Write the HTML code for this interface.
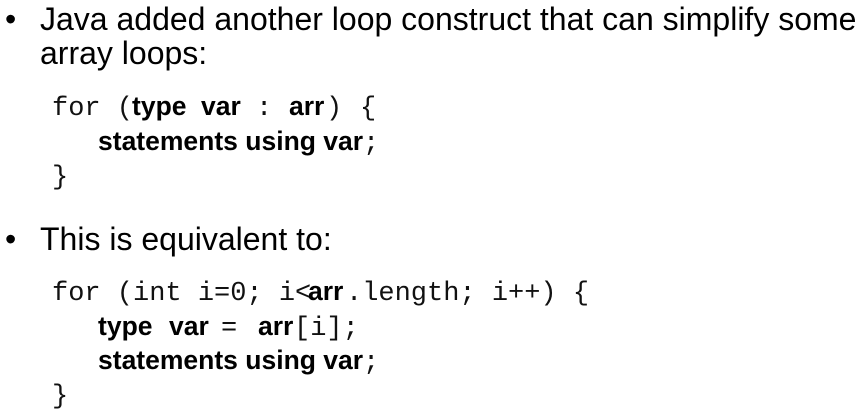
<!DOCTYPE html>
<html><head><meta charset="utf-8"><style>
body{margin:0;width:860px;height:420px;background:#fff;position:relative;overflow:hidden;color:#000}
.s{position:absolute;font-family:"Liberation Sans",Arial,sans-serif;font-size:32px;line-height:32px;white-space:pre}
.m{position:absolute;font-family:"Liberation Mono","Courier New",monospace;font-size:27px;line-height:27px;white-space:pre;color:#111}
.b{position:absolute;font-family:"Liberation Sans",Arial,sans-serif;font-weight:bold;font-size:26.5px;line-height:27px;white-space:pre}
</style></head><body>
<div class="s" style="left:5px;top:3px">•</div>
<div class="s" style="left:40px;top:3px">Java added another loop construct that can simplify some</div>
<div class="s" style="left:40px;top:37px">array loops:</div>

<div class="m" style="left:52px;top:96px">for (</div>
<div class="b" style="left:132px;top:93px">type</div>
<div class="b" style="left:201px;top:93px">var</div>
<div class="m" style="left:256px;top:96px">:</div>
<div class="b" style="left:289px;top:93px">arr</div>
<div class="m" style="left:326px;top:96px">)</div>
<div class="m" style="left:360px;top:96px">{</div>
<div class="b" style="left:98px;top:128px">statements using var</div>
<div class="m" style="left:363px;top:131px">;</div>
<div class="m" style="left:52px;top:165px">}</div>

<div class="s" style="left:5px;top:223px">•</div>
<div class="s" style="left:40px;top:223px">This is equivalent to:</div>

<div class="m" style="left:52px;top:281px">for (int i=0; i&lt;</div>
<div class="b" style="left:308px;top:278px">arr</div>
<div class="m" style="left:346px;top:281px">.length; i++) {</div>
<div class="b" style="left:98px;top:313px">type</div>
<div class="b" style="left:169px;top:313px">var</div>
<div class="m" style="left:221px;top:316px">=</div>
<div class="b" style="left:258px;top:313px">arr</div>
<div class="m" style="left:294px;top:316px">[i];</div>
<div class="b" style="left:98px;top:347px">statements using var</div>
<div class="m" style="left:363px;top:350px">;</div>
<div class="m" style="left:52px;top:384px">}</div>
</body></html>
